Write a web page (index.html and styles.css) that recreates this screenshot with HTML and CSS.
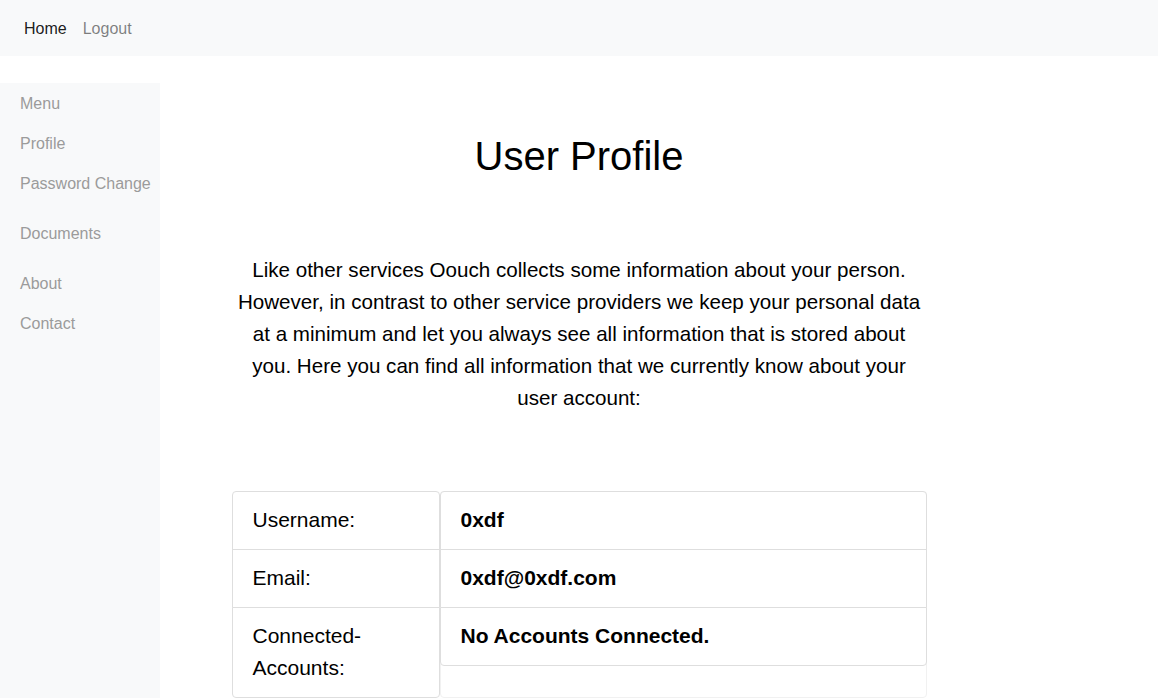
FILE: index.html
```html
<!DOCTYPE html>
<html lang="en">
<head>
<meta charset="utf-8">
<title>User Profile</title>
<link rel="stylesheet" href="styles.css">
</head>
<body>
<nav class="navbar">
  <a class="nav-link active" href="#">Home</a>
  <a class="nav-link" href="#">Logout</a>
</nav>
<div class="layout">
  <aside class="sidebar">
    <ul class="side-group">
      <li><a href="#">Menu</a></li>
      <li><a href="#">Profile</a></li>
      <li><a href="#">Password Change</a></li>
    </ul>
    <ul class="side-group">
      <li><a href="#">Documents</a></li>
    </ul>
    <ul class="side-group">
      <li><a href="#">About</a></li>
      <li><a href="#">Contact</a></li>
    </ul>
  </aside>
  <main class="main">
    <h1 class="title">User Profile</h1>
    <p class="lead">Like other services Oouch collects some information about your person. However, in contrast to other service providers we keep your personal data at a minimum and let you always see all information that is stored about you. Here you can find all information that we currently know about your user account:</p>
    <div class="profile">
      <ul class="list-group labels">
        <li class="item">Username:</li>
        <li class="item">Email:</li>
        <li class="item">Connected-Accounts:</li>
      </ul>
      <div class="values-box">
        <ul class="list-group values">
          <li class="item">0xdf</li>
          <li class="item">0xdf@0xdf.com</li>
          <li class="item">No Accounts Connected.</li>
        </ul>
      </div>
    </div>
  </main>
</div>
</body>
</html>
```

FILE: styles.css
```css
* { box-sizing: border-box; }

html, body {
  margin: 0;
  padding: 0;
  background: #fff;
  color: #000;
  font-family: "Liberation Sans", Arial, sans-serif;
  font-size: 16px;
  line-height: 24px;
}

a { text-decoration: none; }

.navbar {
  display: flex;
  align-items: center;
  height: 56px;
  padding: 9px 16px 7px 16px;
  background: #f8f9fa;
}

.nav-link {
  padding: 8px;
  color: rgba(0, 0, 0, 0.5);
}

.nav-link.active {
  color: rgba(0, 0, 0, 0.9);
}

.layout {
  display: grid;
  grid-template-columns: 160px 1fr 160px;
  margin-top: 27px;
}

.sidebar {
  background: #f8f9fa;
  min-height: calc(100vh - 83px);
  padding-top: 1px;
}

.side-group {
  list-style: none;
  margin: 0 0 10px 0;
  padding: 0;
}

.side-group a {
  display: block;
  padding: 8px 20px;
  color: #9b9b9b;
  white-space: nowrap;
}

.main {
  display: flex;
  flex-direction: column;
  align-items: center;
}

.title {
  margin: 49px 0 0 0;
  font-size: 40px;
  line-height: 48px;
  font-weight: 400;
}

.lead {
  width: 694px;
  margin: 74px 0 0 0;
  font-size: 20.6px;
  line-height: 32px;
  text-align: center;
}

.profile {
  display: grid;
  grid-template-columns: 208px 487px;
  width: 695px;
  margin-top: 77px;
  font-size: 21px;
  line-height: 32px;
}

.list-group {
  list-style: none;
  margin: 0;
  padding: 0;
}

.item {
  padding: 12px 20px 13px 20px;
  border: 1px solid #dedede;
  margin-bottom: -1px;
  background: #fff;
}

.item:first-child {
  border-top-left-radius: 4px;
  border-top-right-radius: 4px;
}

.item:last-child {
  margin-bottom: 0;
  border-bottom-left-radius: 4px;
  border-bottom-right-radius: 4px;
}

.values-box {
  border: 1px solid #f1f1f1;
  border-radius: 4px;
}

.values {
  margin: -1px -1px 0 -1px;
}

.values .item {
  font-weight: 700;
}
```
